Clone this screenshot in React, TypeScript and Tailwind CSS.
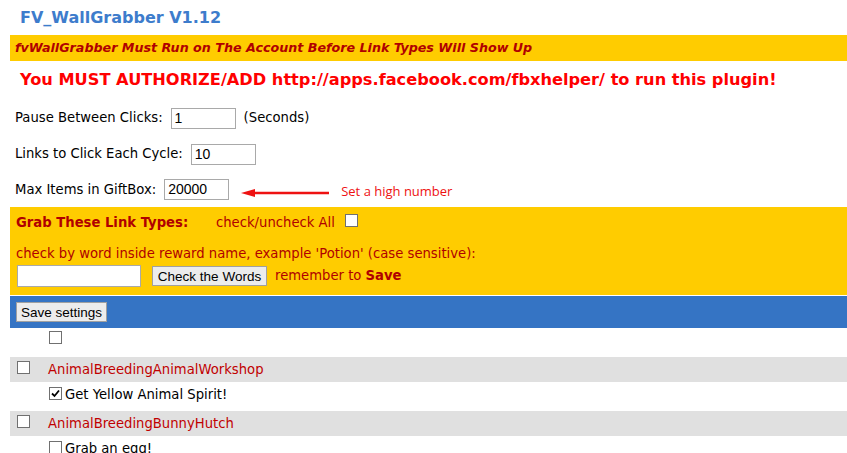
import React from 'react';

function Box({ checked = false }: { checked?: boolean }) {
  return (
    <span className="inline-flex h-[13px] w-[13px] shrink-0 items-center justify-center border border-[#707070] bg-white">
      {checked && (
        <svg width="9" height="9" viewBox="0 0 9 9">
          <path d="M1 4.5 L3.5 7 L8 1.5" fill="none" stroke="#000" strokeWidth="1.8" />
        </svg>
      )}
    </span>
  );
}

function Field({ value, width }: { value: string; width: string }) {
  return (
    <input
      readOnly
      value={value}
      className={`h-[21px] ${width} border border-[#a9a9a9] bg-white px-[3px] font-['Liberation_Sans',sans-serif] text-[14px] text-black outline-none`}
    />
  );
}

const groups = [
  { name: 'AnimalBreedingAnimalWorkshop', item: 'Get Yellow Animal Spirit!', checked: true },
  { name: 'AnimalBreedingBunnyHutch', item: 'Grab an egg!', checked: false },
];

export default function App() {
  return (
    <div className="h-[453px] overflow-hidden bg-white pl-[10px] font-['DejaVu_Sans',sans-serif] text-[13.2px] text-black">
      <div className="flex h-[35px] items-center pl-[10px] text-[16px] font-bold text-[#3d7ccc]">
        FV_WallGrabber V1.12
      </div>

      <div className="flex h-[26px] items-center bg-[#ffcc00] pl-[5px] text-[12.7px] font-bold italic text-[#b00000]">
        fvWallGrabber Must Run on The Account Before Link Types Will Show Up
      </div>

      <div className="flex h-[39px] items-center pl-[10px] text-[16.2px] font-bold text-[#ff0000]">
        You MUST AUTHORIZE/ADD http://apps.facebook.com/fbxhelper/ to run this plugin!
      </div>

      <div className="flex h-[36px] items-center gap-[8px] pl-[5px]">
        <span>Pause Between Clicks:</span>
        <Field value="1" width="w-[65px]" />
        <span>(Seconds)</span>
      </div>
      <div className="flex h-[36px] items-center gap-[8px] pl-[5px]">
        <span>Links to Click Each Cycle:</span>
        <Field value="10" width="w-[65px]" />
      </div>
      <div className="flex h-[35px] items-center pl-[5px]">
        <span className="mr-[8px]">Max Items in GiftBox:</span>
        <Field value="20000" width="w-[65px]" />
        <svg width="90" height="10" viewBox="0 0 90 10" className="ml-[12px] mt-[6px]">
          <line x1="12" y1="5" x2="88" y2="5" stroke="#ee1111" strokeWidth="2.5" />
          <polygon points="0,5 14,1 14,9" fill="#ee1111" />
        </svg>
        <span className="ml-[10px] mt-[4px] font-['Open_Sans',sans-serif] text-[13px] text-[#ee1111]">
          Set a high number
        </span>
      </div>

      <div className="bg-[#ffcc00] pb-[8px] pl-[6px] pt-[8px] text-[#b00000]">
        <div className="flex h-[16px] items-center">
          <span className="w-[200px] font-bold">Grab These Link Types:</span>
          <span>check/uncheck All</span>
          <span className="ml-[10px]"><Box /></span>
        </div>
        <div className="mt-[14px] leading-[18px]">
          check by word inside reward name, example 'Potion' (case sensitive):
        </div>
        <div className="mt-[2px] flex items-center">
          <input
            readOnly
            className="ml-[1px] h-[22px] w-[124px] border border-[#a9a9a9] bg-white outline-none"
          />
          <button className="ml-[11px] h-[20px] w-[115px] border border-[#a0a0a0] bg-[#ececec] font-['Liberation_Sans',sans-serif] text-[13.5px] text-black">
            Check the Words
          </button>
          <span className="ml-[8px]">
            remember to <b>Save</b>
          </span>
        </div>
      </div>

      <div className="mt-[1px] flex h-[32px] items-center bg-[#3574c4] pl-[6px]">
        <button className="h-[20px] w-[91px] border border-[#a0a0a0] bg-[#ececec] font-['Liberation_Sans',sans-serif] text-[13.5px] text-black">
          Save settings
        </button>
      </div>

      <div className="flex h-[29px] items-start pl-[39px] pt-[3px]">
        <Box />
      </div>

      {groups.map((g) => (
        <div key={g.name}>
          <div className="flex h-[25px] items-center bg-[#e0e0e0]">
            <span className="ml-[7px]"><Box /></span>
            <span className="ml-[18px] text-[#c00000]">{g.name}</span>
          </div>
          <div className="flex h-[29px] items-start gap-[3px] pl-[39px] pt-[5px]">
            <Box checked={g.checked} />
            <span className="-mt-[2px]">{g.item}</span>
          </div>
        </div>
      ))}
    </div>
  );
}
